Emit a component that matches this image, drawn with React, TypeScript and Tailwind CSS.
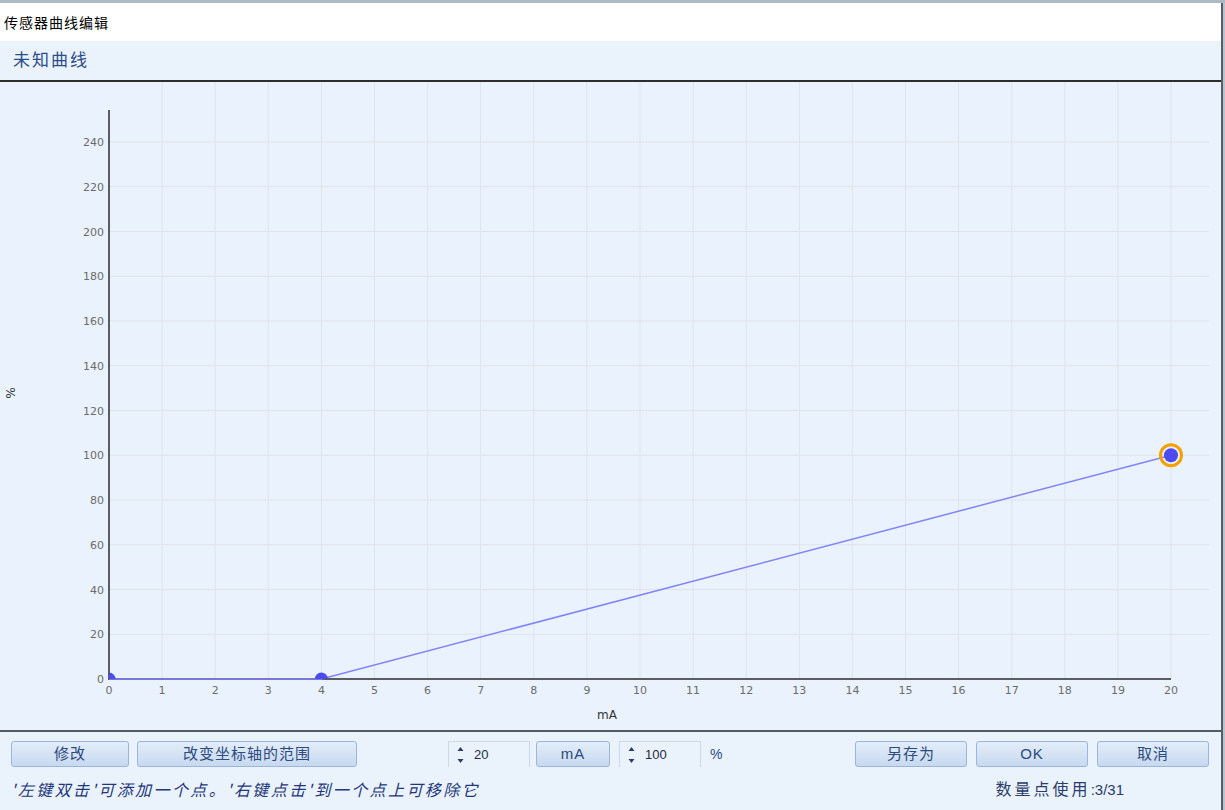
import React from 'react';

const CJK = '"Noto Sans CJK SC", "Noto Sans", sans-serif';

// plot geometry (svg coords, svg top = page y 82)
const X0 = 109;
const XU = 53.1;
const Y0 = 597;
const YU = 2.2375;
const px = (v: number) => X0 + v * XU;
const py = (v: number) => Y0 - v * YU;

const POINTS = [
  { x: 0, y: 0 },
  { x: 4, y: 0 },
  { x: 20, y: 100 },
];

function Chart() {
  const xs = Array.from({ length: 21 }, (_, i) => i);
  const ys = Array.from({ length: 13 }, (_, i) => i * 20);
  return (
    <svg width={1221} height={648} className="block">
      {/* grid */}
      {xs.slice(1).map((v) => (
        <line key={'vx' + v} x1={px(v)} y1={0} x2={px(v)} y2={Y0} stroke="#dfe3ea" strokeWidth={1} />
      ))}
      {ys.slice(1).map((v) => (
        <line key={'hy' + v} x1={X0} y1={py(v)} x2={1209} y2={py(v)} stroke="#dfe3ea" strokeWidth={1} />
      ))}
      {/* axes */}
      <line x1={X0} y1={28} x2={X0} y2={Y0 + 1} stroke="#2b2b2b" strokeWidth={1.5} />
      <line x1={X0} y1={Y0} x2={px(20)} y2={Y0} stroke="#2b2b2b" strokeWidth={1.5} />
      {/* tick labels */}
      {ys.map((v) => (
        <text
          key={'ly' + v}
          x={104}
          y={py(v) + 4}
          textAnchor="end"
          fontSize={11}
          fill="#6b6b6b"
          fontFamily='"DejaVu Sans", Verdana, sans-serif'
        >
          {v}
        </text>
      ))}
      {xs.map((v) => (
        <text
          key={'lx' + v}
          x={px(v)}
          y={Y0 + 15}
          textAnchor="middle"
          fontSize={11}
          fill="#6b6b6b"
          fontFamily='"DejaVu Sans", Verdana, sans-serif'
        >
          {v}
        </text>
      ))}
      <text
        x={6}
        y={311}
        transform="rotate(90 6 311)"
        textAnchor="middle"
        fontSize={12}
        fill="#333"
        fontFamily='"DejaVu Sans", Verdana, sans-serif'
      >
        %
      </text>
      <text x={607} y={637} textAnchor="middle" fontSize={12} fill="#333" fontFamily='"DejaVu Sans", Verdana, sans-serif'>
        mA
      </text>
      {/* curve */}
      <polyline
        points={POINTS.map((p) => `${px(p.x)},${py(p.y)}`).join(' ')}
        fill="none"
        stroke="#8282fa"
        strokeWidth={1.5}
      />
      {/* points */}
      <defs>
        <clipPath id="plot">
          <rect x={X0} y={0} width={1200} height={Y0} />
        </clipPath>
      </defs>
      <g clipPath="url(#plot)">
        {POINTS.slice(0, 2).map((p) => (
          <circle key={p.x} cx={px(p.x)} cy={py(p.y)} r={6.5} fill="#4b4bef" />
        ))}
      </g>
      <circle cx={px(20)} cy={py(100)} r={10.5} fill="none" stroke="#f5a000" strokeWidth={3} />
      <circle cx={px(20)} cy={py(100)} r={7} fill="#4b4bef" />
    </svg>
  );
}

function Btn({ label, w }: { label: string; w: string }) {
  return (
    <button
      className={`${w} h-[26px] shrink-0 rounded-[3px] border border-[#9bb6da] bg-gradient-to-b from-[#e3edf9] to-[#c7d9f0] text-[15px] tracking-[1px] text-[#2c4a7e] flex items-center justify-center`}
      style={{ fontFamily: `"Liberation Sans", ${CJK}` }}
    >
      {label}
    </button>
  );
}

function Spin({ value }: { value: string }) {
  return (
    <div className="w-[82px] h-[26px] shrink-0 border border-b-0 border-[#cdd8e6] flex items-center pl-[7px] gap-[9px]">
      <svg width={9} height={22} viewBox="0 0 9 22">
        <path d="M4.5 3 L7.5 7 L1.5 7 Z" fill="#2c3e66" />
        <path d="M1.5 15 L7.5 15 L4.5 19 Z" fill="#2c3e66" />
      </svg>
      <span className="text-[13px] text-[#1d2a44]" style={{ fontFamily: '"Liberation Sans", sans-serif' }}>
        {value}
      </span>
    </div>
  );
}

export default function App() {
  return (
    <div className="w-[1225px] h-[810px] bg-[#b9c4d1] flex flex-col overflow-hidden" style={{ fontFamily: CJK }}>
      <div className="h-[3px] shrink-0 bg-[#aeb9c6]" />
      <div className="w-[1223px] flex-1 flex flex-col border-r-2 border-[#5a5d62]">
        <div className="h-[38px] shrink-0 bg-white flex items-center pl-[4px] text-[14px] tracking-[1px] text-black">传感器曲线编辑</div>
        <div className="h-[39px] shrink-0 bg-[#eaf2fc] flex items-center pl-[13px] pb-[3px] text-[17px] tracking-[2px] text-[#2b4c88]">未知曲线</div>
        <div className="h-[2px] shrink-0 bg-[#2e2e2e]" />
        <div className="h-[648px] shrink-0 bg-[#eaf3fd]">
          <Chart />
        </div>
        <div className="h-[2px] shrink-0 bg-[#55585d]" />
        <div className="flex-1 bg-[#eaf2fc] flex flex-col">
          <div className="flex items-center pt-[9px] pl-[11px]">
            <Btn label="修改" w="w-[118px]" />
            <div className="w-[8px]" />
            <Btn label="改变坐标轴的范围" w="w-[220px]" />
            <div className="w-[91px]" />
            <Spin value="20" />
            <div className="w-[6px]" />
            <Btn label="mA" w="w-[74px]" />
            <div className="w-[9px]" />
            <Spin value="100" />
            <span className="ml-[9px] text-[14px] text-[#2c4a7e]" style={{ fontFamily: '"Liberation Sans", sans-serif' }}>
              %
            </span>
            <div className="ml-auto flex gap-[9px] pr-[12px]">
              <Btn label="另存为" w="w-[112px]" />
              <Btn label="OK" w="w-[112px]" />
              <Btn label="取消" w="w-[112px]" />
            </div>
          </div>
          <div className="flex items-center mt-[9px] pl-[11px] h-[26px]">
            <span className="italic text-[16px] tracking-[2.4px] text-[#23367a]">'左键双击'可添加一个点。'右键点击'到一个点上可移除它</span>
            <span className="ml-auto mr-[97px] text-[16px] tracking-[3px] text-[#2b3c6a]">
              数量点使用
              <span className="tracking-normal text-[15px]" style={{ fontFamily: '"Liberation Sans", sans-serif' }}>
                :3/31
              </span>
            </span>
          </div>
        </div>
      </div>
    </div>
  );
}
